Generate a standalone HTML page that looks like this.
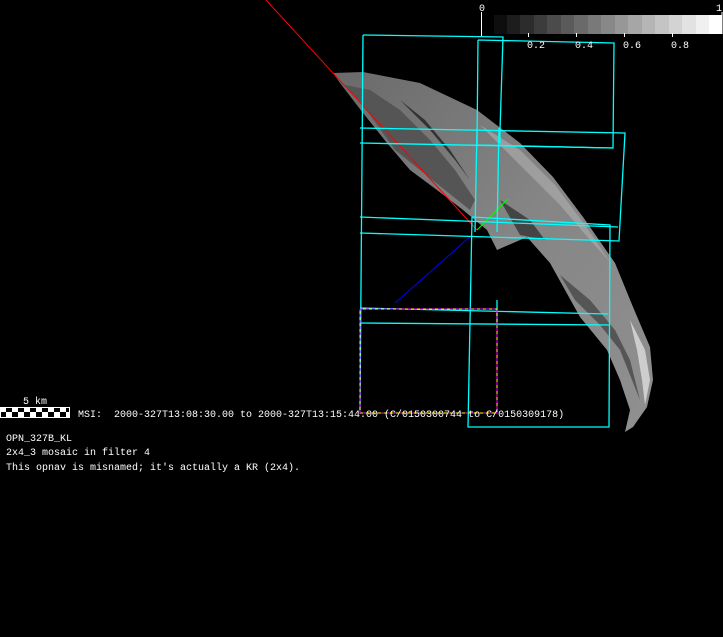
<!DOCTYPE html>
<html><head><style>
html,body{margin:0;padding:0;background:#000;}
body{width:723px;height:637px;overflow:hidden;position:relative;}
svg{position:absolute;left:0;top:0;}
</style></head><body>
<svg width="723" height="637" viewBox="0 0 723 637" xmlns="http://www.w3.org/2000/svg" font-family="Liberation Mono, monospace" font-size="10">
<defs>
<linearGradient id="g" x1="0" y1="0" x2="1" y2="1">
<stop offset="0" stop-color="#6a6a6a"/>
<stop offset="0.5" stop-color="#858585"/>
<stop offset="1" stop-color="#909090"/>
</linearGradient>
</defs>
<!-- asteroid limb -->
<path d="M333,73 L363,72 L420,83 L477,110 L520,143 L553,177 L583,217 L615,263 L633,307 L650,347 L653,380 L647,407 L633,427 L625,432 L630,410 L625,395 L620,380 L607,350 L580,317 L550,263 L527,237 L497,250 L487,230 L463,210 L437,190 L410,170 L387,143 L363,113 L340,83 Z" fill="url(#g)"/>
<path d="M345,85 L370,115 L395,150 L420,170 L445,190 L470,210 L475,200 L455,170 L430,140 L400,110 L370,90 Z" fill="#555"/>
<path d="M560,275 L590,300 L615,330 L630,360 L640,400 L632,380 L620,350 L600,325 L575,300 Z" fill="#555"/>
<path d="M480,125 L520,150 L555,185 L585,225 L610,262 L590,240 L560,205 L525,170 Z" fill="#aaa" opacity="0.7"/>
<path d="M630,320 L645,350 L650,380 L645,405 L642,380 L637,350 Z" fill="#ddd" opacity="0.8"/>
<path d="M400,100 L430,130 L455,160 L470,180 L450,150 L425,120 Z" fill="#333"/>
<path d="M500,200 L530,220 L545,240 L520,235 Z" fill="#444"/>
<!-- axes -->
<line x1="266" y1="0" x2="477" y2="230" stroke="#f00" stroke-width="1"/>
<line x1="472" y1="235" x2="395" y2="303" stroke="#00f" stroke-width="1"/>
<line x1="477" y1="230" x2="508" y2="199" stroke="#0f0" stroke-width="1"/>
<!-- frames -->
<g fill="none" stroke="#0ff" stroke-width="1.3">
<polyline points="363,35 503,37 500,130 500,143"/>
<line x1="363" y1="35" x2="360" y2="410"/>
<polyline points="478,40 614,43 613,148 477,145 478,40"/>
<polyline points="360,128 625,133 619,241 360,233"/>
<polyline points="360,143 613,148"/>
<polyline points="360,217 618,227"/>
<line x1="477" y1="128" x2="475" y2="232"/>
<line x1="499" y1="128" x2="497" y2="232"/>
<polyline points="472,217 610,225 609,427 468,427 472,217"/>
<polyline points="360,308 608,314"/>
<polyline points="360,323 610,325"/>
<line x1="497" y1="300" x2="497" y2="325"/>
</g>
<g fill="none" stroke-width="1">
<polyline points="360,309 497,309 497,413 360,413 360,309" stroke="#ff0"/>
<polyline points="360,309 497,309 497,413 360,413 360,309" stroke="#f0f" stroke-dasharray="3,3"/>
</g>
<!-- colorbar -->
<g>
<rect x="494" y="15" width="13.5" height="19" fill="#0e0e0e"/><rect x="507" y="15" width="14" height="19" fill="#1d1d1d"/>
<rect x="520" y="15" width="14" height="19" fill="#2c2c2c"/><rect x="534" y="15" width="14" height="19" fill="#3c3c3c"/>
<rect x="547" y="15" width="14" height="19" fill="#4b4b4b"/><rect x="561" y="15" width="14" height="19" fill="#5a5a5a"/>
<rect x="574" y="15" width="14" height="19" fill="#6a6a6a"/><rect x="588" y="15" width="14" height="19" fill="#797979"/>
<rect x="601" y="15" width="14" height="19" fill="#888"/><rect x="615" y="15" width="14" height="19" fill="#979797"/>
<rect x="628" y="15" width="14" height="19" fill="#a6a6a6"/><rect x="642" y="15" width="14" height="19" fill="#b5b5b5"/>
<rect x="655" y="15" width="14" height="19" fill="#c4c4c4"/><rect x="669" y="15" width="14" height="19" fill="#d3d3d3"/>
<rect x="682" y="15" width="14" height="19" fill="#e2e2e2"/><rect x="696" y="15" width="14" height="19" fill="#f0f0f0"/>
<rect x="709" y="15" width="13" height="19" fill="#fff"/>
</g>
<g stroke="#fff">
<line x1="481.5" y1="12" x2="481.5" y2="36"/>
<line x1="528.5" y1="33" x2="528.5" y2="37"/><line x1="576.5" y1="33" x2="576.5" y2="37"/>
<line x1="624.5" y1="33" x2="624.5" y2="37"/><line x1="672.5" y1="33" x2="672.5" y2="37"/>
<line x1="722" y1="12" x2="722" y2="34"/>
</g>
<g fill="#fff">
<text x="479" y="11">0</text><text x="716" y="11">1</text>
<text x="527" y="48">0.2</text><text x="575" y="48">0.4</text><text x="623" y="48">0.6</text><text x="671" y="48">0.8</text>
</g>
<!-- scale bar -->
<rect x="0.5" y="407.5" width="69" height="10" fill="#fff" stroke="#fff"/>
<g fill="#000">
<rect x="6" y="408" width="6" height="4"/><rect x="18" y="408" width="6" height="4"/><rect x="30" y="408" width="6" height="4"/><rect x="42" y="408" width="6" height="4"/><rect x="54" y="408" width="6" height="4"/><rect x="66" y="408" width="3" height="4"/>
<rect x="1" y="412" width="5" height="5"/><rect x="12" y="412" width="6" height="5"/><rect x="24" y="412" width="6" height="5"/><rect x="36" y="412" width="6" height="5"/><rect x="48" y="412" width="6" height="5"/><rect x="60" y="412" width="6" height="5"/>
</g>
<g fill="#fff">
<text x="23" y="404">5 km</text>
<text x="78" y="417" xml:space="preserve">MSI:  2000-327T13:08:30.00 to 2000-327T13:15:44.00 (C/0150300744 to C/0150309178)</text>
<text x="6" y="441">OPN_327B_KL</text>
<text x="6" y="455">2x4_3 mosaic in filter 4</text>
<text x="6" y="470">This opnav is misnamed; it′s actually a KR (2x4).</text>
</g>
</svg>
</body></html>
